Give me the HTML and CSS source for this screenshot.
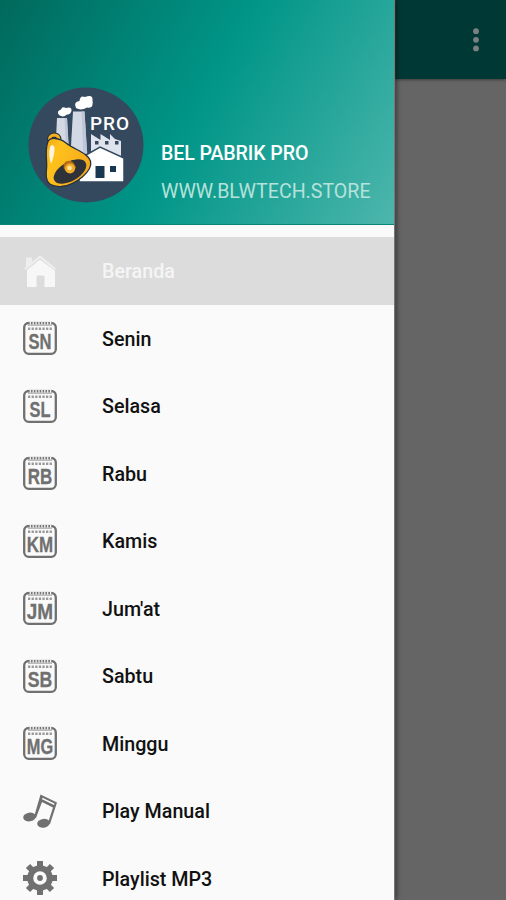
FILE: index.html
```
<!DOCTYPE html>
<html lang="id">
<head>
<meta charset="utf-8">
<title>Bel Pabrik Pro</title>
<link rel="stylesheet" href="styles.css">
</head>
<body>
<svg class="defs" aria-hidden="true">
  <defs>
    <linearGradient id="gold" x1="0" y1="0" x2="1" y2="0.5">
      <stop offset="0" stop-color="#f0a818"/><stop offset="0.3" stop-color="#ffc21c"/><stop offset="1" stop-color="#f5a91c"/>
    </linearGradient>
    <symbol id="calendar" viewBox="0 0 34 34">
      <rect x="1.2" y="2" width="31.6" height="30.800" rx="4.500" fill="none" stroke="#707070" stroke-width="2.300"/>
      <path d="M5 2H29" stroke="#fafafa" stroke-width="3"/>
      <path d="M5 2.200H29" stroke="#777" stroke-width="2.600" stroke-dasharray="1.700 1.200"/>
      <path d="M5 4.300H29" stroke="#aaa" stroke-width="1"/>
      <path d="M5 7.800H29.500" stroke="#999" stroke-width="2.400" stroke-dasharray="2.300 1.300"/>
    </symbol>
  </defs>
</svg>
<div class="screen">
  <aside class="drawer">
    <header class="header">
      <svg class="avatar" viewBox="0 0 116 116">
        <circle cx="58" cy="58" r="57.5" fill="#34495e"/>
        <path d="M29 31H39L41 72H27Z" fill="#d3d8e5"/>
        <path d="M45 24.500H56.500L59.500 76H42Z" fill="#d3d8e5"/>
        <path d="M36.500 31L39 31 41 62 38 60ZM53.500 24.500H56.500L59.500 70H55.500Z" fill="#bfc6d8"/>
        <path d="M31 28Q28 24 33 22.500Q34 19 38 21Q44 19 43.500 24Q42 28 39 27.500Q35 31 31 28Z" fill="#fff"/>
        <path d="M48 21Q45 15 51.500 14Q52 8 57 10Q65 7 64.500 13Q66 22 59 20.500Q53 24 48 21Z" fill="#fff"/>
        <text class="pro" x="62" y="43" textLength="39" lengthAdjust="spacing">PRO</text>
        <path d="M63 66V47L72.500 53V47L82 53V47L87 52L93 54V74H63Z" fill="#dfe3ec"/>
        <path d="M67 54h3.500v3.500h-3.500zM77 54h3.500v3.500h-3.500zM87 54h3.500v3.500h-3.500z" fill="#34495e"/>
        <path d="M51 95V72L72 60L96 71V95Z" fill="#fff" stroke="#34495e" stroke-width="1.500"/>
        <path d="M67.500 79H76.500V91H67.500ZM82 79H88V85H82Z" fill="#183851"/>
        <path d="M22 55Q20 49 26 48Q31 48 31 53" fill="none" stroke="#27323e" stroke-width="5"/>
        <path d="M22 55Q20 49 26 48Q31 48 31 53" fill="none" stroke="#f5af20" stroke-width="3"/>
        <path d="M19.500 56C21 49 32 51 38 56C47 63 60 66 62.500 74C65 84 48 98 33 99.500C20 100 17 94 18.500 82C19.500 74 16.500 65 19.500 56Z" fill="url(#gold)" stroke="#27323e" stroke-width="1.300"/>
        <ellipse cx="42" cy="84.500" rx="18" ry="9.500" transform="rotate(-30 42 84.500)" fill="#30323a"/>
        <path d="M22 60Q20 67 23 77Q27 67 26.500 60Q24 56 22 60Z" fill="#fff" opacity=".85"/>
        <path d="M37 75Q45 71 48 81L40 86Q33 81 37 75Z" fill="#b96f15"/>
        <circle cx="42" cy="81.500" r="5" fill="#f3ad27"/>
        <circle cx="41.500" cy="81" r="2.300" fill="#ffe5a0"/>
      </svg>
      <div class="account">
        <div class="name">BEL PABRIK PRO</div>
        <div class="site">WWW.BLWTECH.STORE</div>
      </div>
    </header>
    <nav class="menu">
      <a class="item active"><svg class="icon" viewBox="0 0 34 34"><path d="M3 3.500H9V8L17 1.200L33 14.500L31.500 16L17 4L2.500 16L1.200 14.500L3 13Z" fill="#eee"/><path d="M4 16L17 5.500L32 17V33H21.500V23Q21.500 21.500 20 21.500H15Q13.500 21.500 13.500 23V33H4Z" fill="#f7f7f7"/></svg><span>Beranda</span></a>
      <a class="item"><svg class="icon" viewBox="0 0 34 34"><use href="#calendar"/><text class="code" x="5.500" y="27.800" textLength="23" lengthAdjust="spacingAndGlyphs">SN</text></svg><span>Senin</span></a>
      <a class="item"><svg class="icon" viewBox="0 0 34 34"><use href="#calendar"/><text class="code" x="6.500" y="27.800" textLength="21" lengthAdjust="spacingAndGlyphs">SL</text></svg><span>Selasa</span></a>
      <a class="item"><svg class="icon" viewBox="0 0 34 34"><use href="#calendar"/><text class="code" x="4.800" y="27.800" textLength="24.500" lengthAdjust="spacingAndGlyphs">RB</text></svg><span>Rabu</span></a>
      <a class="item"><svg class="icon" viewBox="0 0 34 34"><use href="#calendar"/><text class="code" x="3.800" y="27.800" textLength="26.400" lengthAdjust="spacingAndGlyphs">KM</text></svg><span>Kamis</span></a>
      <a class="item"><svg class="icon" viewBox="0 0 34 34"><use href="#calendar"/><text class="code" x="3.800" y="27.800" textLength="26.400" lengthAdjust="spacingAndGlyphs">JM</text></svg><span>Jum'at</span></a>
      <a class="item"><svg class="icon" viewBox="0 0 34 34"><use href="#calendar"/><text class="code" x="4.800" y="27.800" textLength="24.500" lengthAdjust="spacingAndGlyphs">SB</text></svg><span>Sabtu</span></a>
      <a class="item"><svg class="icon" viewBox="0 0 34 34"><use href="#calendar"/><text class="code" x="3.800" y="27.800" textLength="26.400" lengthAdjust="spacingAndGlyphs">MG</text></svg><span>Minggu</span></a>
      <a class="item"><svg class="icon" viewBox="0 0 34 34"><g fill="#707070"><ellipse cx="6.500" cy="23" rx="6.300" ry="4.400" transform="rotate(-8 6.500 23)"/><ellipse cx="20.500" cy="29.300" rx="6.300" ry="4.400" transform="rotate(-8 20.500 29.300)"/><path fill-rule="evenodd" d="M17.500 .5L34 8.500L27 30H24.700L30 13.500L19 8L13 24H10.700ZM19.500 3.700L19 5.200L31 11L31.500 9.600Z"/></g></svg><span>Play Manual</span></a>
      <a class="item"><svg class="icon" viewBox="0 0 34 34"><g fill="none" stroke="#707070"><path d="M17 0V6M17 28V34M0 17H6M28 17H34M5 5L9 9M25 25L29 29M29 5L25 9M9 25L5 29" stroke-width="6"/><circle cx="17" cy="17" r="9.800" stroke-width="6"/></g><circle cx="17" cy="17" r="2.900" fill="#707070"/></svg><span>Playlist MP3</span></a>
    </nav>
  </aside>
  <main class="page">
    <div class="toolbar"><svg class="more" viewBox="0 0 6 24"><g fill="#7c8080"><circle cx="3" cy="3.200" r="2.900"/><circle cx="3" cy="11.800" r="2.900"/><circle cx="3" cy="20.400" r="2.900"/></g></svg></div>
  </main>
</div>
</body>
</html>
```
FILE: styles.css
```
* { box-sizing: border-box; }
body { margin: 0; font-family: Roboto, sans-serif; background: #656565; }
.defs { display: block; width: 0; height: 0; }
.screen { display: flex; height: 900px; overflow: hidden; }
.drawer {
  position: relative;
  flex: 0 0 394px;
  background: #fafafa;
  box-shadow: 1px 0 1px #777, 2px 0 5px rgba(0, 0, 0, .6);
  z-index: 1;
}
.header {
  display: flex;
  align-items: flex-start;
  height: 225px;
  padding: 87px 0 0 28px;
  background: linear-gradient(119.7deg, #00695c, #009688 50%, #4db6ac);
  border-bottom: 1px solid #078779;
}
.avatar { flex: none; width: 116px; height: 116px; }
.pro { font: 500 19px Roboto, sans-serif; fill: #fff; }
.account { padding: 48px 0 0 17px; white-space: nowrap; }
.name, .site { font-size: 19.6px; line-height: 38px; }
.name { color: #fff; font-weight: 500; letter-spacing: -.1px; }
.site { color: #b5e2db; }
.menu { padding-top: 12px; }
.item {
  display: flex;
  align-items: center;
  height: 67.5px;
  padding-left: 23px;
  color: #111;
  font-size: 19.7px;
  font-weight: 500;
}
.item span { padding: 2px 0 0 45px; white-space: nowrap; }
.active { background: #dcdcdc; color: #f5f5f5; }
.icon { flex: none; width: 34px; height: 34px; overflow: visible; }
.code { font: 700 21.5px "Liberation Sans", sans-serif; fill: #707070; stroke: #707070; stroke-width: .3px; }
.page { flex: 1; background: #656565; }
.toolbar {
  display: flex;
  justify-content: flex-end;
  height: 79px;
  padding: 28px 27px 0 0;
  background: #003835;
  box-shadow: 0 1px 3px rgba(0, 0, 0, .4);
}
.more { width: 6px; height: 24px; }
```
